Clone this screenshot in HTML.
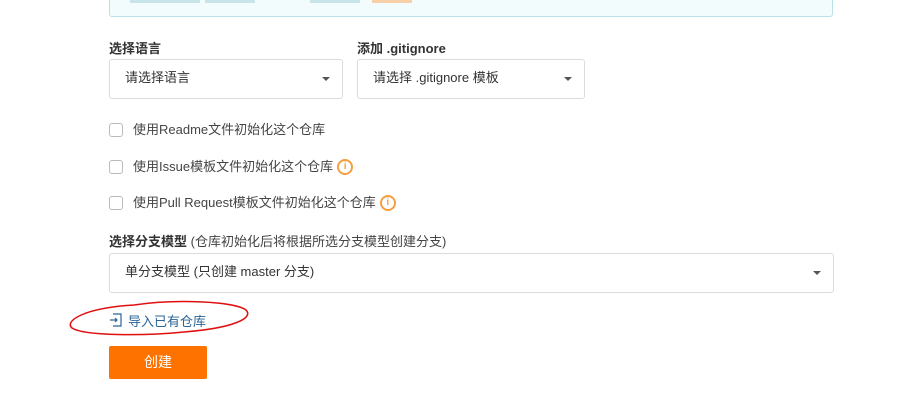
<!DOCTYPE html>
<html><head><meta charset="utf-8"><style>
body{margin:0;width:916px;height:418px;background:#fff;position:relative;overflow:hidden;font-family:"Liberation Sans","Noto Sans CJK SC",sans-serif;font-size:13px;color:#333}
.a{position:absolute}
.sel{position:absolute;border:1px solid #dcdcdc;border-radius:3px;background:#fff;box-sizing:border-box;height:40px;line-height:36px;padding-left:15px;color:#333}
.sel:after{content:"";position:absolute;right:12px;top:17px;border:4px solid transparent;border-top:4px solid #555;border-bottom:0}
.cb{position:absolute;left:109px;width:14px;height:14px;border:1px solid #bbb;border-radius:3px;box-sizing:border-box;background:#fff}
.lab{position:absolute;left:133px;color:#444;line-height:16px}
.info{display:inline-block;width:12px;height:12px;border:2px solid #f5a040;border-radius:50%;color:#f5a040;font-size:10px;line-height:12px;text-align:center;font-weight:bold;vertical-align:top;margin-left:4px;margin-top:0}
b{color:#333}
</style></head><body>
<div class="a" style="left:109px;top:-10px;width:724px;height:27px;background:#f3fcfd;border:1px solid #b9e2e8;border-radius:3px;box-sizing:border-box"></div>
<div class="a" style="left:130px;top:0px;width:70px;height:3px;background:#c8e6ea"></div>
<div class="a" style="left:205px;top:0px;width:50px;height:3px;background:#c8e6ea"></div>
<div class="a" style="left:310px;top:0px;width:50px;height:3px;background:#c8e6ea"></div>
<div class="a" style="left:372px;top:0px;width:40px;height:3px;background:#f8d0a8"></div>
<div class="a" style="left:109px;top:38px"><b>选择语言</b></div>
<div class="a" style="left:357px;top:38px"><b>添加 .gitignore</b></div>
<div class="sel" style="left:109px;top:59px;width:234px">请选择语言</div>
<div class="sel" style="left:357px;top:59px;width:228px">请选择 .gitignore 模板</div>
<div class="cb" style="top:123px"></div><div class="lab" style="top:122px">使用Readme文件初始化这个仓库</div>
<div class="cb" style="top:160px"></div><div class="lab" style="top:159px">使用Issue模板文件初始化这个仓库<span class="info">i</span></div>
<div class="cb" style="top:196px"></div><div class="lab" style="top:195px">使用Pull Request模板文件初始化这个仓库<span class="info">i</span></div>
<div class="a" style="left:109px;top:231px"><b>选择分支模型</b> <span style="color:#444">(仓库初始化后将根据所选分支模型创建分支)</span></div>
<div class="sel" style="left:109px;top:253px;width:725px">单分支模型 (只创建 master 分支)</div>
<svg class="a" style="left:64px;top:296px" width="192" height="46"><path d="M70 9C110 3 170 5 182 14C190 22 170 32 120 36C80 40 20 40 8 32C0 25 20 12 70 9" fill="none" stroke="#e01010" stroke-width="1.5"/></svg>
<svg class="a" style="left:109px;top:313px" width="14" height="14" fill="none" stroke="#2a6496" stroke-width="1.2"><path d="M4 1h8v12H4M1 7h7M6 5l2 2-2 2"/></svg>
<div class="a" style="left:128px;top:311px;color:#2a6496">导入已有仓库</div>
<div class="a" style="left:109px;top:346px;width:98px;height:33px;background:#fe7300;border-radius:2px;color:#fff;font-size:14px;line-height:33px;text-align:center">创建</div>
</body></html>
